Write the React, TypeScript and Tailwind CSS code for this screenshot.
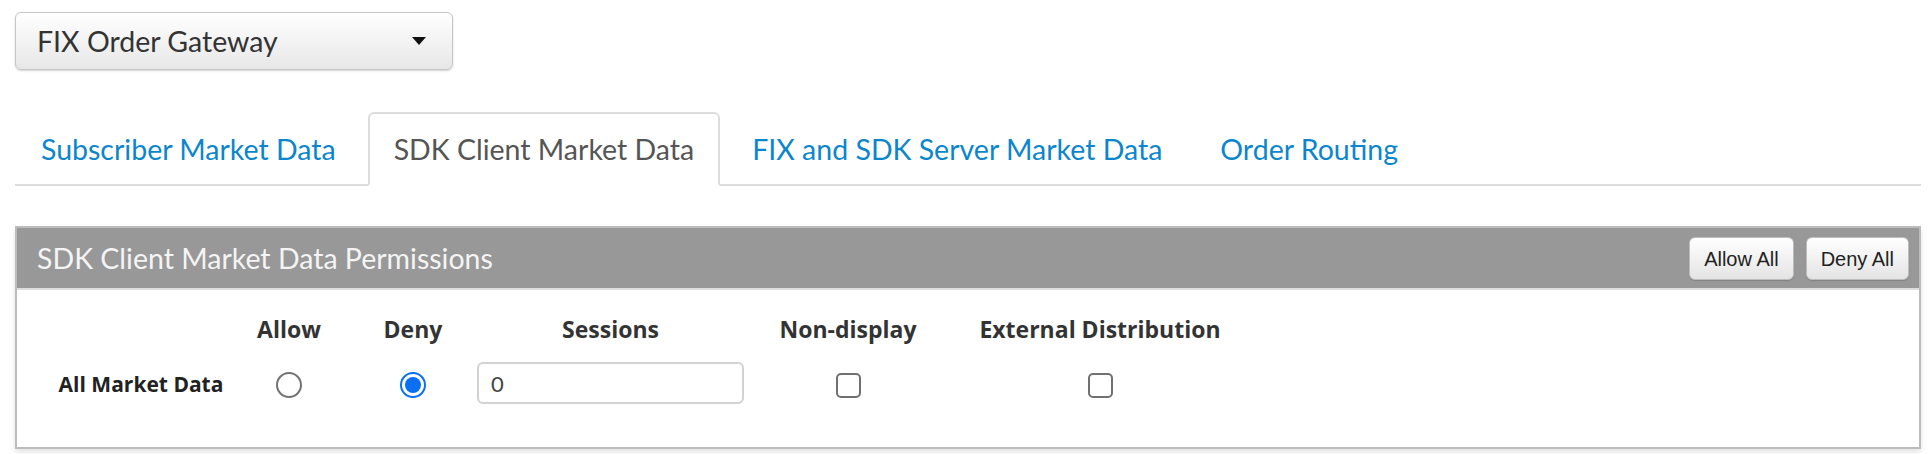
import React from 'react';

const tabs = [
  { label: 'Subscriber Market Data', active: false },
  { label: 'SDK Client Market Data', active: true },
  { label: 'FIX and SDK Server Market Data', active: false },
  { label: 'Order Routing', active: false },
];

// column slots for the permissions grid (label, allow, deny, sessions, non-display, external)
const cols = [
  'ml-[23px] w-[202px]',
  'ml-[7px] w-[80px]',
  'ml-[44px] w-[80px]',
  'ml-[24px] w-[267px]',
  'ml-[24px] w-[160px]',
  'ml-[42px] w-[260px]',
];

const headers = ['', 'Allow', 'Deny', 'Sessions', 'Non-display', 'External Distribution'];

const Radio: React.FC<{ checked?: boolean }> = ({ checked }) =>
  checked ? (
    <span className="w-[26px] h-[26px] rounded-full border-2 border-[#0a6ff2] flex items-center justify-center">
      <span className="w-[16px] h-[16px] rounded-full bg-[#0a6ff2]" />
    </span>
  ) : (
    <span className="w-[26px] h-[26px] rounded-full border-2 border-[#727272] bg-white" />
  );

const Checkbox: React.FC = () => (
  <span className="w-[25px] h-[25px] rounded-[5px] border-2 border-[#707070] bg-white" />
);

const HeaderButton: React.FC<{ children: React.ReactNode }> = ({ children }) => (
  <button className="h-[43px] px-[14px] rounded-[6px] border border-[#bdbdbd] bg-gradient-to-b from-white to-[#e4e4e4] shadow-[0_1px_1px_rgba(0,0,0,0.15)] text-[20px] text-[#222] font-['Liberation_Sans',Arial,sans-serif]">
    {children}
  </button>
);

export default function App() {
  return (
    <div className="min-h-screen bg-white pl-[15px] pr-[9px] pt-[12px] font-['Lato',sans-serif]">
      {/* gateway select */}
      <button className="w-[438px] h-[58px] flex items-center justify-between pl-[21px] pr-[26px] rounded-[6px] border border-[#c6c6c6] bg-gradient-to-b from-white to-[#e7e7e7] shadow-[0_1px_2px_rgba(0,0,0,0.18)] text-[28.5px] text-[#333]">
        <span>FIX Order Gateway</span>
        <svg width="14" height="8" viewBox="0 0 14 8">
          <path d="M0 0 L14 0 L7 8 Z" fill="#111" />
        </svg>
      </button>

      {/* tabs */}
      <div className="mt-[42px] flex border-b-2 border-[#dddddd]">
        {tabs.map((t) => (
          <div
            key={t.label}
            className={
              t.active
                ? 'h-[74px] -mb-[2px] mr-[6px] px-[24px] flex items-center rounded-t-[6px] border-2 border-[#dddddd] border-b-white bg-white text-[28.5px] text-[#555]'
                : 'h-[74px] -mb-[2px] mr-[6px] px-[24px] flex items-center border-2 border-transparent text-[28.5px] text-[#0b86cd]'
            }
          >
            {t.label}
          </div>
        ))}
      </div>

      {/* permissions panel */}
      <div className="mt-[40px] border-2 border-[#bcbcbc] shadow-[0_3px_6px_rgba(0,0,0,0.12)]">
        <div className="h-[62px] bg-[#989898] border-b-2 border-[#dedede] flex items-center justify-between pl-[20px] pr-[10px]">
          <span className="text-[28.5px] text-[#f4f4f4]">SDK Client Market Data Permissions</span>
          <div className="flex gap-[12px] pt-[1px]">
            <HeaderButton>Allow All</HeaderButton>
            <HeaderButton>Deny All</HeaderButton>
          </div>
        </div>

        <div className="h-[157px] pt-[24px] font-['Open_Sans',sans-serif]">
          <div className="flex h-[30px] items-center">
            {headers.map((h, i) => (
              <div key={i} className={`${cols[i]} text-center text-[23px] font-bold text-[#333] whitespace-nowrap`}>
                {h}
              </div>
            ))}
          </div>

          <div className="mt-[18px] flex h-[42px] items-center">
            <div className={`${cols[0]} pt-[4px] text-center text-[21px] font-bold text-[#222] whitespace-nowrap`}>All Market Data</div>
            <div className={`${cols[1]} pt-[4px] flex justify-center`}>
              <Radio />
            </div>
            <div className={`${cols[2]} pt-[4px] flex justify-center`}>
              <Radio checked />
            </div>
            <div className={cols[3]}>
              <input
                readOnly
                value="0"
                className="w-full h-[42px] rounded-[6px] border-2 border-[#d2d2d2] px-[12px] text-[22px] text-[#444] font-['Lato',sans-serif] outline-none"
              />
            </div>
            <div className={`${cols[4]} pt-[4px] flex justify-center`}>
              <Checkbox />
            </div>
            <div className={`${cols[5]} pt-[4px] flex justify-center`}>
              <Checkbox />
            </div>
          </div>
        </div>
      </div>
    </div>
  );
}
